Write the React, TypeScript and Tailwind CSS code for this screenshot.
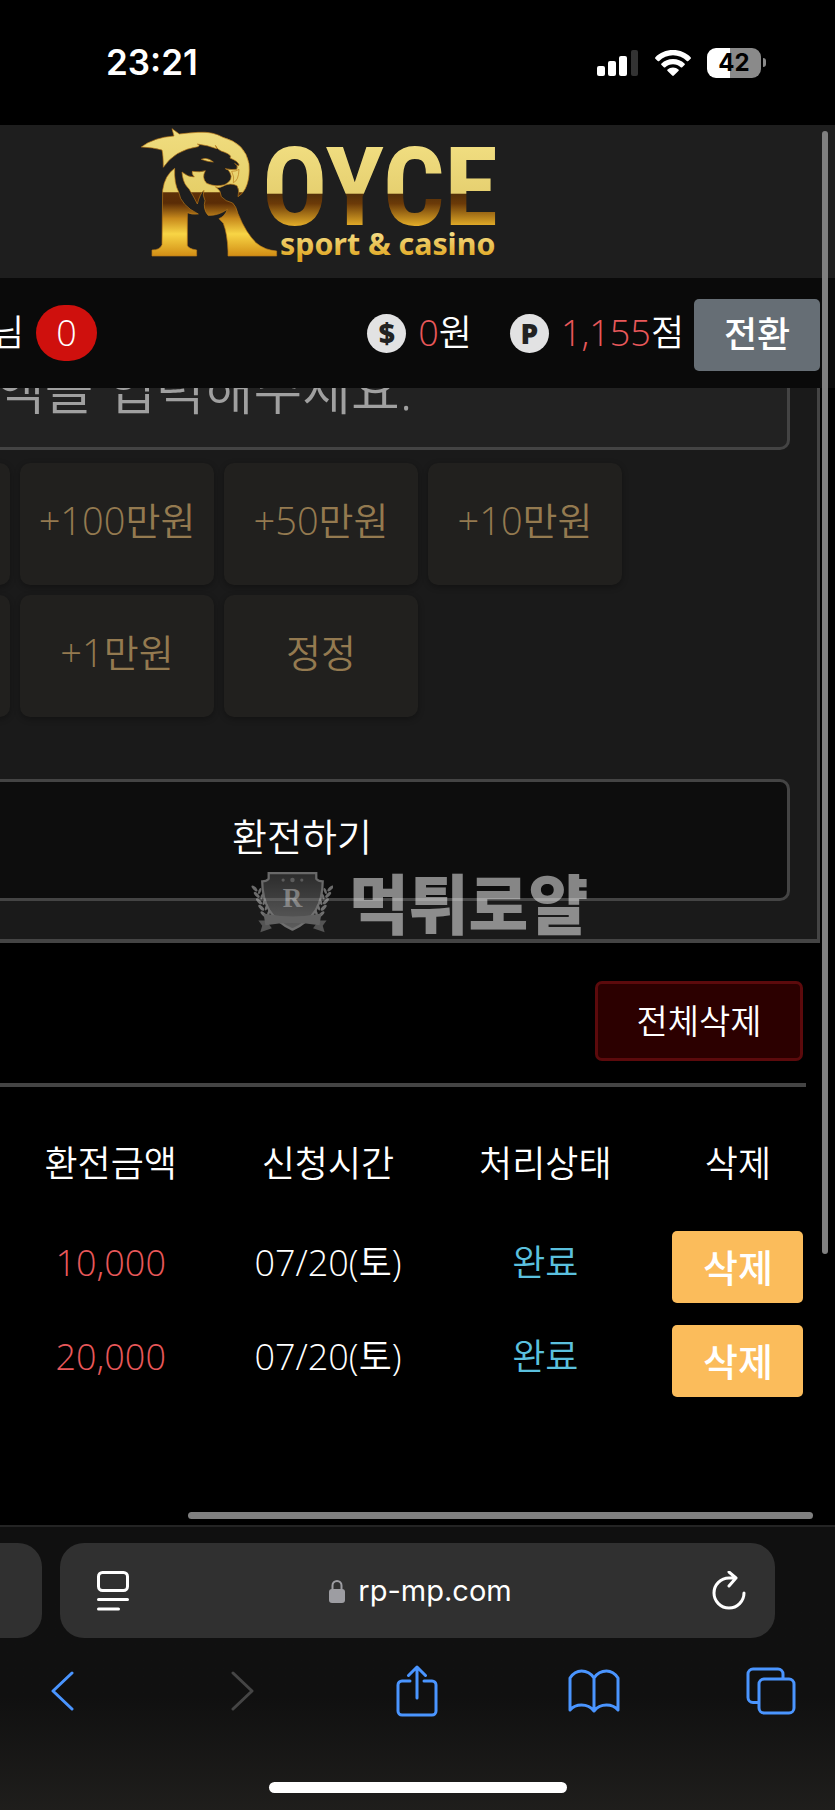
import React, { useState } from "react";

const quickAmounts = ["", "+100만원", "+50만원", "+10만원", "", "+1만원", "정정"];

const initialRows = [
  { id: 1, amount: "10,000", date: "07/20(토)", status: "완료" },
  { id: 2, amount: "20,000", date: "07/20(토)", status: "완료" },
];

function StatusBar() {
  return (
    <div className="flex h-[125px] items-center justify-between bg-black pl-[106px] pr-[69px] font-['Inter',sans-serif]">
      <span className="text-[35px] font-semibold text-white">23:21</span>
      <div className="flex items-center gap-4">
        <svg width="42" height="26" viewBox="0 0 42 26" aria-label="signal">
          <rect x="0" y="16" width="8" height="10" rx="2" fill="#fff" />
          <rect x="11" y="11" width="8" height="15" rx="2" fill="#fff" />
          <rect x="22" y="6" width="8" height="20" rx="2" fill="#fff" />
          <rect x="34" y="0" width="7" height="26" rx="2" fill="#333" />
        </svg>
        <svg width="36" height="26" viewBox="0 0 36 26" fill="#fff" aria-label="wifi">
          <path d="M18 0C11 0 4.700 2.700.4 7.200c-.5.500-.5 1.100 0 1.600l2.300 2.200c.4.400 1 .4 1.500 0C7.800 7.400 12.700 5.300 18 5.300s10.200 2.100 13.800 5.700c.5.400 1.100.4 1.500 0l2.300-2.200c.5-.5.5-1.100 0-1.600C31.300 2.700 25 0 18 0z" />
          <path d="M18 9c-4.500 0-8.500 1.700-11.500 4.500-.5.500-.5 1.100 0 1.500l2.300 2.300c.4.400 1 .4 1.500 0 2-1.900 4.700-3 7.700-3s5.700 1.100 7.700 3c.5.400 1.100.4 1.500 0l2.300-2.300c.5-.4.5-1 0-1.500C26.500 10.700 22.500 9 18 9z" />
          <path d="M18 17.500c-2.100 0-4 .8-5.400 2-.5.400-.5 1 0 1.500l4.600 4.600c.5.500 1.100.5 1.600 0l4.600-4.600c.5-.5.5-1.100 0-1.500-1.400-1.200-3.300-2-5.400-2z" />
        </svg>
        <div className="flex items-center gap-[2px]">
          <div className="flex h-[30px] w-[54px] items-center justify-center rounded-[9px] bg-[linear-gradient(to_right,#fff_43%,#8a8a8a_43%)]">
            <span className="text-[24px] font-bold leading-[30px] text-black">42</span>
          </div>
          <div className="h-[9px] w-[3px] rounded-r-full bg-[#8a8a8a]" />
        </div>
      </div>
    </div>
  );
}

function Logo() {
  return (
    <svg width="370" height="150" viewBox="30 30 1110 450" role="img" aria-label="Royce sport & casino">
      <defs>
        <linearGradient id="lionGold" gradientUnits="userSpaceOnUse" x1="0" y1="20" x2="0" y2="405">
          <stop offset="0" stopColor="#f0dd80" />
          <stop offset="0.49" stopColor="#e6cf68" />
          <stop offset="0.5" stopColor="#5e3008" />
          <stop offset="0.58" stopColor="#5a2c06" />
          <stop offset="0.7" stopColor="#c88a1c" />
          <stop offset="0.82" stopColor="#f8d545" />
          <stop offset="1" stopColor="#d08a12" />
        </linearGradient>
        <linearGradient id="wordGold" gradientUnits="userSpaceOnUse" x1="0" y1="95" x2="0" y2="332">
          <stop offset="0" stopColor="#f0dd80" />
          <stop offset="0.59" stopColor="#e6d070" />
          <stop offset="0.6" stopColor="#54300a" />
          <stop offset="0.72" stopColor="#6b3a08" />
          <stop offset="1" stopColor="#e3ac28" />
        </linearGradient>
        <linearGradient id="subGold" gradientUnits="userSpaceOnUse" x1="0" y1="350" x2="0" y2="430">
          <stop offset="0" stopColor="#f6e08a" />
          <stop offset="1" stopColor="#dfa51f" />
        </linearGradient>
      </defs>
      <g transform="translate(24 21)" fill="url(#lionGold)" stroke="#b97818" strokeWidth="2">
        <path d="M10 75 Q48 46 108 42 L102 20 L124 36 Q150 33 180 31 Q225 28 255 46 Q322 64 333 125 Q337 170 322 200 Q312 218 300 224 Q306 205 297 191 Q276 180 252 194 Q240 200 232 194 Q250 206 250 224 Q262 238 284 243 Q294 252 300 275 Q325 335 356 364 Q380 384 416 387 L416 402 L270 402 L270 387 Q268 335 256 304 L243 290 Q262 282 268 262 Q240 282 210 280 Q194 260 201 236 Q192 218 198 205 Q186 214 178 246 Q168 226 162 216 Q154 200 146 193 Q134 178 132 150 Q150 166 169 165 Q160 154 163 148 Q186 152 202 146 Q190 168 206 184 Q232 196 260 188 Q288 174 276 152 Q272 142 262 140 Q280 144 296 142 Q302 130 290 124 Q304 136 303 128 Q300 118 276 108 Q284 100 258 90 Q240 86 232 70 Q238 82 236 80 Q210 70 178 66 Q188 70 180 74 Q110 84 76 136 Q76 100 72 84 Q45 76 10 75 Z" />
        <path d="M110 139 Q108 185 122 210 Q128 250 181 276 Q160 278 148 272 L148 370 Q150 380 176 384 L176 402 L42 402 L42 384 Q66 384 72 368 L74 205 Q80 160 110 139 Z" />
        <path d="M190 112 Q208 104 226 120 Q210 120 190 112 Z" />
        <path d="M281 148 Q296 148 303 142 Q302 176 286 182 Q290 164 281 148 Z" />
      </g>
      <text x="396" y="330" fontSize="326" fontWeight="700" fill="url(#wordGold)" fontFamily="'Roboto Condensed', Roboto, sans-serif">OYCE</text>
      <text x="450" y="420" fontSize="91" fontWeight="700" fill="url(#subGold)" fontFamily="'Noto Sans', 'Open Sans', sans-serif">sport &amp; casino</text>
    </svg>
  );
}

function CoinIcon({ letter }: { letter: string }) {
  return (
    <span className="flex size-[39px] items-center justify-center rounded-full bg-[#e2e2e3] text-[28px] font-extrabold leading-none text-[#222]">
      {letter}
    </span>
  );
}

function UserBar() {
  return (
    <div className="flex h-[110px] items-center justify-between bg-[#0a0a0a] pr-[15px] text-[36px] font-[350] text-white">
      <div className="-ml-[9px] flex items-center gap-[12px]">
        <span>님</span>
        <span className="flex h-[56px] w-[61px] items-center justify-center rounded-[28px] bg-[#cf100d]">0</span>
      </div>
      <div className="flex items-center">
        <CoinIcon letter="$" />
        <span className="ml-[12px]">
          <span className="text-[#e8585a]">0</span>원
        </span>
        <span className="ml-[38px]">
          <CoinIcon letter="P" />
        </span>
        <span className="ml-[12px]">
          <span className="text-[#e8585a]">1,155</span>점
        </span>
        <button className="ml-[10px] mt-1 h-[72px] w-[126px] rounded-[5px] bg-[#666e75] font-medium">
          전환
        </button>
      </div>
    </div>
  );
}

function ExchangeForm() {
  const [amount, setAmount] = useState("");

  return (
    <div className="mr-[15px] overflow-hidden border-b-4 border-r-[3px] border-[#444] bg-[#1a1a1a] pb-[38px] pr-[27px]">
      <input
        aria-label="환전금액"
        value={amount}
        onChange={(e) => setAmount(e.target.value)}
        placeholder="액을 입력해주세요."
        className="-ml-1 -mt-[60px] block h-[122px] w-[calc(100%+4px)] rounded-r-[10px] border-[3px] border-l-0 border-[#444] bg-[#222] text-[53px] font-[350] text-white placeholder:text-[#a0a0a0]"
      />
      <div className="-ml-[184px] mt-[13px] grid grid-cols-[repeat(4,194px)] gap-[10px]">
        {quickAmounts.map((label, i) => (
          <button
            key={i}
            aria-label={label || "금액 추가"}
            className="h-[122px] rounded-[10px] bg-[#21201e] pb-2 text-[38px] font-[350] text-[#947a50] shadow-[0_2px_6px_rgba(0,0,0,0.3)]"
          >
            {label}
          </button>
        ))}
      </div>
      <button className="-ml-[186px] mt-[62px] block h-[122px] w-[calc(100%+186px)] rounded-[10px] border-[3px] border-[#444] bg-[#0d0d0d] pb-2 text-[38px] font-[350] text-white">
        환전하기
      </button>
    </div>
  );
}

function History() {
  const [rows, setRows] = useState(initialRows);

  return (
    <div className="flex-1 bg-black">
      <div className="mr-[29px] flex justify-end border-b-4 border-[#444] pb-[22px] pr-[3px] pt-[38px]">
        <button
          onClick={() => setRows([])}
          className="h-[80px] w-[208px] rounded-[7px] border-[3px] border-[#5c0a0c] bg-[#2c0000] text-[34px] font-[350] text-white"
        >
          전체삭제
        </button>
      </div>
      <div className="pr-[15px]">
        <table className="w-full table-fixed text-center text-[36px] font-[350] text-white">
          <thead>
            <tr className="h-[133px]">
              <th className="w-[27%] pt-5 font-[350]">환전금액</th>
              <th className="w-[26%] pt-5 font-[350]">신청시간</th>
              <th className="w-[27%] pt-5 font-[350]">처리상태</th>
              <th className="w-[20%] pt-5 font-[350]">삭제</th>
            </tr>
          </thead>
          <tbody>
            {rows.map((row) => (
              <tr key={row.id} className="h-[94px]">
                <td className="pb-2 text-[#e8585a]">{row.amount}</td>
                <td className="pb-2">{row.date}</td>
                <td className="pb-2 text-[#5bc0de]">{row.status}</td>
                <td>
                  <button
                    onClick={() => setRows(rows.filter((r) => r.id !== row.id))}
                    className="mx-auto block h-[72px] w-[131px] rounded-[5px] bg-[#fbbc5b] text-[38px] font-medium"
                  >
                    삭제
                  </button>
                </td>
              </tr>
            ))}
          </tbody>
        </table>
      </div>
    </div>
  );
}

function Watermark() {
  return (
    <div className="pointer-events-none absolute left-[250px] top-[869px] flex items-center gap-[16px] opacity-50">
      <svg width="83" height="64" viewBox="0 0 258 198">
        <defs>
          <linearGradient id="shield" x1="0" y1="0" x2="0" y2="1">
            <stop offset="0" stopColor="#4a4a4a" />
            <stop offset="1" stopColor="#a0a0a0" />
          </linearGradient>
        </defs>
        <path
          d="M58 12 H206 V30 Q212 38 226 38 Q226 90 204 128 Q180 166 132 188 Q84 166 60 128 Q38 90 38 38 Q52 38 58 30 Z"
          fill="url(#shield)"
          stroke="#c4c4c4"
          strokeWidth="7"
        />
        <circle cx="103" cy="34" r="5" fill="#aaa" />
        <circle cx="132" cy="34" r="7" fill="#aaa" />
        <circle cx="161" cy="34" r="5" fill="#aaa" />
        <text x="132" y="118" textAnchor="middle" fontSize="84" fontWeight="700" fill="#eee" fontFamily="'Liberation Serif', serif">R</text>
        {[0, 1, 2, 3, 4].map((i) => (
          <g key={i} fill="#c8c8c8">
            <ellipse cx={14 + i * 7} cy={60 + i * 20} rx="5" ry="12" transform={`rotate(-45 ${14 + i * 7} ${60 + i * 20})`} />
            <ellipse cx={30 + i * 7} cy={68 + i * 17} rx="4" ry="10" transform={`rotate(20 ${30 + i * 7} ${68 + i * 17})`} />
            <ellipse cx={250 - i * 7} cy={60 + i * 20} rx="5" ry="12" transform={`rotate(45 ${250 - i * 7} ${60 + i * 20})`} />
            <ellipse cx={234 - i * 7} cy={68 + i * 17} rx="4" ry="10" transform={`rotate(-20 ${234 - i * 7} ${68 + i * 17})`} />
          </g>
        ))}
        <path d="M50 160 H26 L38 176 L32 196 L68 184 Z M214 160 H238 L226 176 L232 196 L196 184 Z" fill="#8e8e8e" />
        <path d="M42 138 Q132 156 222 138 L216 174 Q132 160 48 174 Z" fill="#a8a8a8" />
      </svg>
      <span className="font-['Noto_Sans_CJK_KR',sans-serif] text-[65px] font-black leading-[60px] text-white">먹튀로얄</span>
    </div>
  );
}

function BrowserBar() {
  return (
    <div className="flex h-[285px] flex-col border-t-2 border-[#242424] bg-linear-to-b from-[#101010] from-60% to-[#1f1e1c] pt-[16px] font-['Inter',sans-serif]">
      <div className="flex h-[95px] gap-[18px] pr-[60px]">
        <div className="w-[42px] rounded-r-[24px] bg-[#303030]" />
        <div className="flex flex-1 items-center justify-between rounded-[24px] bg-[#303030] pl-[37px] pr-[28px] text-white">
          <button aria-label="페이지 설정">
            <svg width="32" height="40" viewBox="0 0 32 40" fill="none" stroke="#fff" strokeWidth="3" strokeLinecap="round">
              <rect x="1.500" y="1.500" width="29" height="18" rx="4" />
              <path d="M1.500 28.500h29M1.500 38h20" />
            </svg>
          </button>
          <div className="flex items-center gap-[12px]">
            <svg width="18" height="24" viewBox="0 0 18 24">
              <rect x="1" y="10" width="16" height="14" rx="3" fill="#9d9da2" />
              <path d="M4.500 11V6.500a4.500 4.500 0 0 1 9 0V11" fill="none" stroke="#9d9da2" strokeWidth="2" />
            </svg>
            <span className="text-[29px]">rp-mp.com</span>
          </div>
          <button aria-label="새로고침">
            <svg width="36" height="40" viewBox="0 0 36 40" fill="none" stroke="#fff" strokeWidth="3" strokeLinecap="round" strokeLinejoin="round">
              <path d="M33 22A15 15 0 1 1 18 7h7M18 1l7 6-7 8" />
            </svg>
          </button>
        </div>
      </div>
      <div className="-mx-6 mt-[25px] grid h-[56px] grid-cols-5 place-items-center">
        <button aria-label="뒤로">
          <svg width="26" height="40" viewBox="0 0 26 40" fill="none" stroke="#4a95ff" strokeWidth="3" strokeLinecap="round" strokeLinejoin="round">
            <path d="M21 2L2 20l19 18" />
          </svg>
        </button>
        <button aria-label="앞으로" disabled>
          <svg width="26" height="40" viewBox="0 0 26 40" fill="none" stroke="#454545" strokeWidth="3" strokeLinecap="round" strokeLinejoin="round">
            <path d="M5 2l19 18L5 38" />
          </svg>
        </button>
        <button aria-label="공유">
          <svg width="42" height="52" viewBox="0 0 42 52" fill="none" stroke="#4a95ff" strokeWidth="3" strokeLinecap="round" strokeLinejoin="round">
            <path d="M14 16H6a4 4 0 0 0-4 4v26a4 4 0 0 0 4 4h30a4 4 0 0 0 4-4V20a4 4 0 0 0-4-4h-8M21 33V2M12.500 10.500L21 2l8.500 8.500" />
          </svg>
        </button>
        <button aria-label="책갈피">
          <svg width="52" height="44" viewBox="0 0 52 44" fill="none" stroke="#4a95ff" strokeWidth="3" strokeLinecap="round" strokeLinejoin="round">
            <path d="M26 9C23 4.500 18.500 2 13.500 2S5 4.500 2 9v32c3-3.500 6.500-5 11.500-5S23 38 26 42c3-4 7.500-6 12.500-6S47 37.500 50 41V9c-3-4.500-6.500-7-11.500-7S29 4.500 26 9zM26 9v32" />
          </svg>
        </button>
        <button aria-label="탭">
          <svg width="50" height="48" viewBox="0 0 50 48" fill="none" stroke="#4a95ff" strokeWidth="3" strokeLinejoin="round">
            <rect x="13" y="12" width="35" height="34" rx="5" />
            <path d="M13 35.500H7a5 5 0 0 1-5-5V7a5 5 0 0 1 5-5h25a5 5 0 0 1 5 5v5" />
          </svg>
        </button>
      </div>
      <div className="mx-auto mt-[63px] h-[11px] w-[298px] rounded-full bg-white" />
    </div>
  );
}

export default function App() {
  return (
    <div className="relative flex min-h-screen flex-col overflow-hidden bg-black font-['Open_Sans','Noto_Sans_CJK_KR',sans-serif]">
      <StatusBar />
      <header className="h-[153px] bg-[#1e1e1e] pl-[140px]">
        <Logo />
      </header>
      <UserBar />
      <ExchangeForm />
      <History />
      <BrowserBar />

      <Watermark />

      {/* Scroll indicators */}
      <div className="absolute right-[7px] top-[131px] h-[1123px] w-[6px] rounded-full bg-[#808080]" />
      <div className="absolute bottom-[291px] left-[188px] right-[22px] h-[7px] rounded-full bg-[#808080]" />
    </div>
  );
}
